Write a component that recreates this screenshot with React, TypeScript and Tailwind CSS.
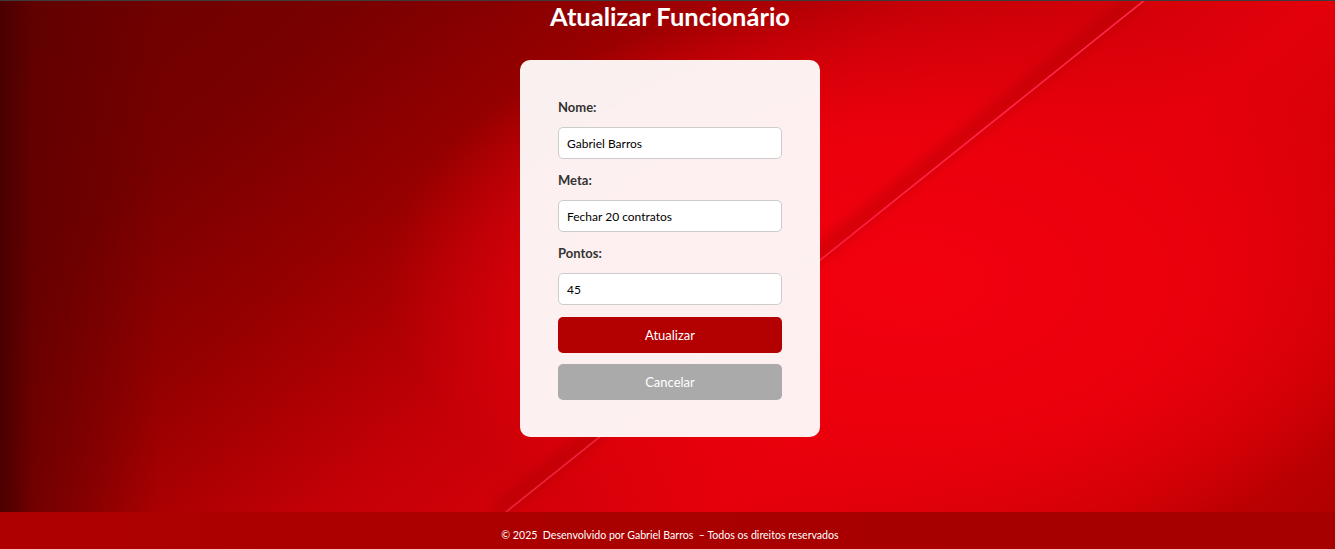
import React from "react";

function Field({ label, value }: { label: string; value: string }) {
  return (
    <div className="flex flex-col">
      <label className="mb-[12px] block text-[13px] font-bold leading-[16px] text-[#333333]">{label}</label>
      <input
        readOnly
        value={value}
        className="mb-[13px] h-[32px] w-full rounded-[5px] border border-[#cccccc] bg-white px-[8px] text-[12px] text-black outline-none"
      />
    </div>
  );
}

export default function App() {
  return (
    <div className="flex h-[549px] w-full flex-col overflow-hidden font-['Lato',sans-serif]">
      <div className="h-px w-full bg-[#3c3c3c]" />
      <main className="relative flex flex-1 flex-col items-center pl-[5px] bg-[linear-gradient(to_right,#4a0000_0%,rgba(90,0,0,0.6)_2.5%,rgba(90,0,0,0)_12%),radial-gradient(ellipse_52%_75%_at_68%_55%,#f3000f_0%,#ea000c_40%,rgba(228,0,10,0)_75%),linear-gradient(140deg,#6a0000_0%,#780000_18%,#950000_32%,#c40006_48%,#e2000b_68%,#cc0004_88%,#b00000_100%)]">
        <svg
          className="pointer-events-none absolute inset-0 h-full w-full"
          viewBox="0 0 1335 511"
          preserveAspectRatio="none"
        >
          <defs>
            <filter id="blur" x="-20%" y="-20%" width="140%" height="140%">
              <feGaussianBlur stdDeviation="6" />
            </filter>
            <linearGradient id="lg" x1="1146" y1="0" x2="506" y2="511" gradientUnits="userSpaceOnUse">
              <stop offset="0" stopColor="#ff2a4c" stopOpacity="1" />
              <stop offset="0.5" stopColor="#ff2a4c" stopOpacity="0.8" />
              <stop offset="1" stopColor="#ff4060" stopOpacity="0.55" />
            </linearGradient>
          </defs>
          <line x1="1136" y1="-2" x2="496" y2="511" stroke="#a00004" strokeWidth="16" opacity="0.35" filter="url(#blur)" />
          <line x1="1146" y1="-2" x2="506" y2="511" stroke="url(#lg)" strokeWidth="1.6" />
        </svg>
        <h1 className="relative z-10 text-[25.5px] font-bold leading-[31px] text-white">Atualizar Funcionário</h1>
        <div className="relative z-10 mt-[28px] flex w-[300px] flex-col rounded-[10px] bg-[rgba(255,255,255,0.94)] px-[38px] pb-[37px] pt-[39px]">
          <Field label="Nome:" value="Gabriel Barros" />
          <Field label="Meta:" value="Fechar 20 contratos" />
          <div className="flex flex-col">
            <label className="mb-[12px] block text-[13px] font-bold leading-[16px] text-[#333333]">Pontos:</label>
            <input
              readOnly
              value="45"
              className="h-[32px] w-full rounded-[5px] border border-[#cccccc] bg-white px-[8px] text-[12px] text-black outline-none"
            />
          </div>
          <button className="mt-[12px] h-[36px] w-full rounded-[5px] bg-[#b30000] pt-px text-[13px] text-white">Atualizar</button>
          <button className="mt-[11px] h-[36px] w-full rounded-[5px] bg-[#aaaaaa] pt-px text-[13px] text-white">Cancelar</button>
        </div>
      </main>
      <footer className="flex h-[37px] items-center justify-center pl-[5px] bg-[linear-gradient(to_right,#ae0000,#a80000_60%,#a60000)] pt-[10px]">
        <p className="whitespace-pre text-[10.6px] text-white">© 2025  Desenvolvido por Gabriel Barros  – Todos os direitos reservados</p>
      </footer>
    </div>
  );
}
